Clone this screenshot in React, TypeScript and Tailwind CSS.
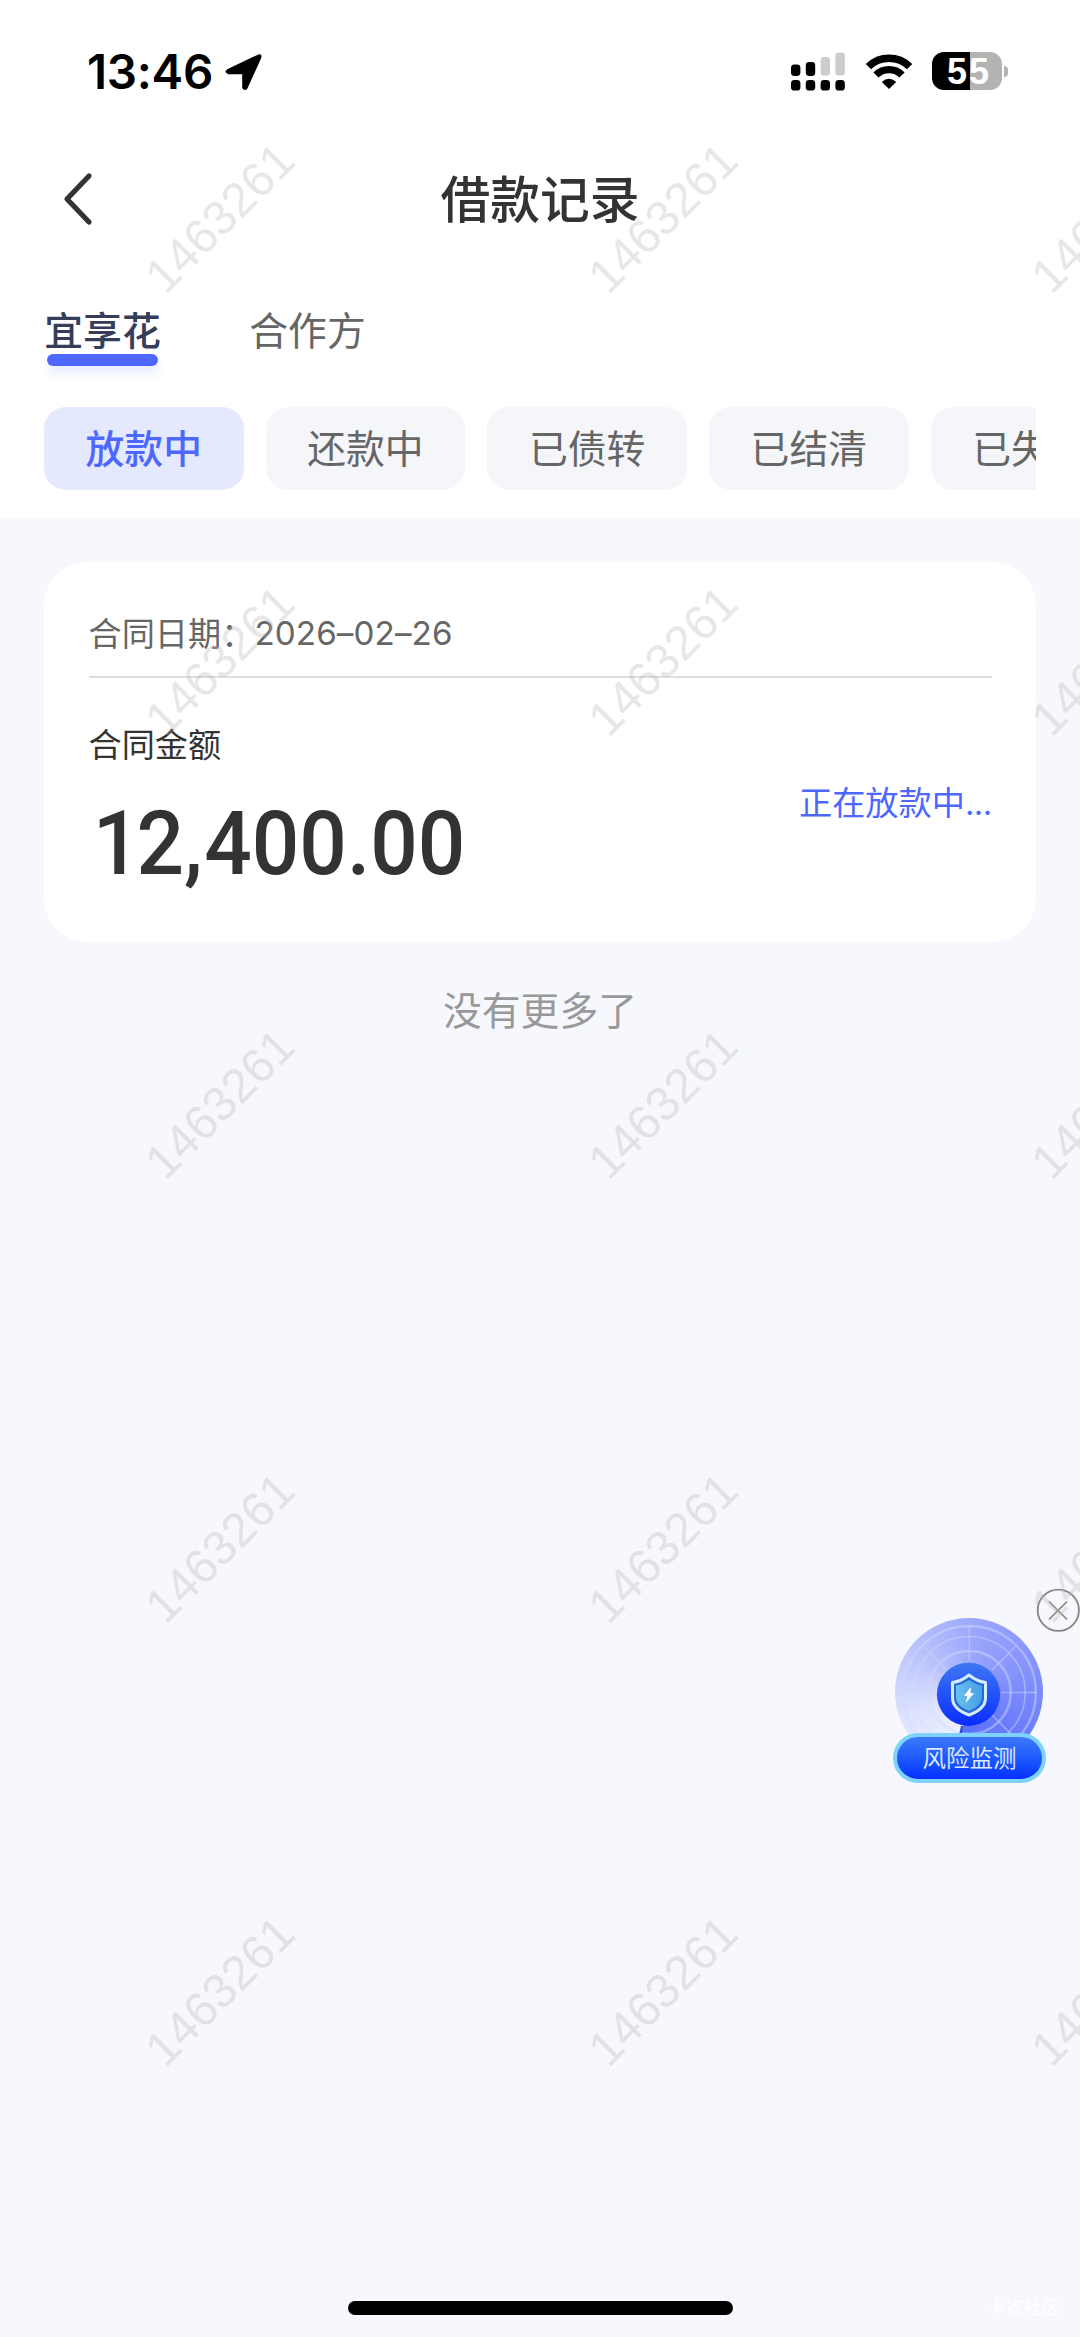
import React from 'react';

const filters = ['放款中', '还款中', '已债转', '已结清', '已失效'];
const rows = [0, 1, 2, 3, 4];
const cols = [0, 1, 2];

function StatusBar() {
  return (
    <div className="flex h-[144px] items-start pt-[50px] pl-[87px] pr-[72px] text-black">
      <span className="mt-[-1px] w-[138px] text-[47.500px] leading-[46px] font-semibold tracking-[-0.3px] whitespace-nowrap">13:46</span>
      <svg className="mt-[3px]" width="38" height="38" viewBox="0 0 38 38">
        <path d="M2.200 16.200 31.800 2.200 Q38 -0.500 36 5.600 L22.400 35.400 Q19.800 39 17.200 35 V21.200 H3.400 Q-1.800 19.600 2.200 16.200Z" fill="#000" />
      </svg>
      <div className="flex-1" />
      <svg className="mt-[2px]" width="54" height="39" viewBox="0 0 54 39">
        <rect x="0" y="12.400" width="9.400" height="11.600" rx="3.400" />
        <rect x="14.800" y="10" width="9.400" height="14" rx="3.400" />
        <rect x="29.600" y="5" width="9.400" height="18.600" rx="3.400" fill="#ccc" />
        <rect x="44.400" y="0.400" width="9.400" height="23.200" rx="3.400" fill="#ccc" />
        <rect x="0" y="28" width="9.400" height="10.600" rx="3.400" />
        <rect x="14.800" y="28" width="9.400" height="10.600" rx="3.400" />
        <rect x="29.600" y="28" width="9.400" height="10.600" rx="3.400" />
        <rect x="44.400" y="28" width="9.400" height="10.600" rx="3.400" />
      </svg>
      <svg className="mt-[4px] ml-[20px]" width="48" height="36" viewBox="0 0 48 36">
        <path d="M3.400 12.600 A29.500 29.500 0 0 1 44.600 12.600" fill="none" stroke="#000" strokeWidth="7.600" />
        <path d="M11 21 A18.400 18.400 0 0 1 37 21" fill="none" stroke="#000" strokeWidth="7.400" />
        <path d="M24 35 L16.800 28 Q24 21.600 31.200 28Z" />
      </svg>
      <div className="mt-[2px] ml-[19px] flex items-center gap-[2px]">
        <div className="flex h-[38px] w-[70px] items-center justify-center rounded-[12px] bg-[linear-gradient(90deg,#000_0_38px,#b3b3b3_38px)] pt-[1px] text-[36px] leading-[38px] font-bold font-['Liberation_Sans'] tracking-[2px] text-white">
          <span className="-mr-[4px]">55</span>
        </div>
        <div className="h-[11px] w-[4px] rounded-r-full bg-[#b3b3b3]" />
      </div>
    </div>
  );
}

function Watermarks() {
  return (
    <div className="pointer-events-none absolute inset-0 overflow-hidden">
      {rows.map((r) =>
        cols.map((c) => (
          <span
            key={`${r}-${c}`}
            className="absolute flex h-[60px] w-[240px] -translate-x-1/2 -translate-y-1/2 -rotate-45 items-center justify-center text-[48px] font-['Liberation_Sans'] text-[#b4b4b4]/32"
            style={{ left: 219.5 + c * 443.2, top: 218 + r * 443.2 }}
          >
            1463261
          </span>
        )),
      )}
    </div>
  );
}

function RiskWidget() {
  return (
    <div className="absolute top-[1588px] right-0 h-[200px] w-[190px]">
      <div className="absolute top-[30px] left-[5px] h-[148px] w-[148px] rounded-full bg-[conic-gradient(from_190deg,#f0f3ff,#dde2fe_60deg,#b9c2fc_120deg,#98a5fb_180deg,#8492fb_240deg,#6a7cfb_300deg,#5a70fb)] [clip-path:inset(0_0_30px_0)]" />
      <svg className="absolute top-0 left-0" width="190" height="200" viewBox="0 0 190 200">
        <defs>
          <linearGradient id="core" x1="0" y1="0" x2="0" y2="1">
            <stop offset="0" stopColor="#3d78f2" />
            <stop offset="1" stopColor="#0a2cff" />
          </linearGradient>
          <linearGradient id="shield" x1="0" y1="0" x2="1" y2="0">
            <stop offset="0" stopColor="#6cc0f0" />
            <stop offset="1" stopColor="#449fe4" />
          </linearGradient>
          <clipPath id="cut"><rect x="0" y="0" width="190" height="148" /></clipPath>
        </defs>
        <g clipPath="url(#cut)">
          <g fill="none" stroke="#d3dbff" strokeOpacity="0.45">
            <circle cx="79.300" cy="104.500" r="66.500" strokeWidth="2.400" />
            <circle cx="79.300" cy="104.500" r="56" strokeWidth="1.600" />
            <circle cx="79.300" cy="104.500" r="41.500" strokeWidth="2.600" />
            <path d="M79.300 38V72M111 104.500H146M57 82 34 59M102 82l23-23M102 127l24 24" strokeWidth="1.500" />
          </g>
          <circle cx="78.500" cy="106.300" r="31.600" fill="url(#core)" />
          <path d="M71 138h2l-1 9h-3z" fill="#2d4bd0" />
        </g>
        <path d="M79 87 Q87 93.500 95.500 94.500 V110 Q95.500 121 79 127 Q62.500 121 62.500 110 V94.500 Q71 93.500 79 87Z" fill="#2469d8" stroke="#d3ecff" strokeWidth="3" strokeLinejoin="round" />
        <path d="M79 92 Q85.500 96.500 92 97.500 V109 Q92 118 79 123 Q66 118 66 109 V97.500 Q72.500 96.500 79 92Z" fill="url(#shield)" />
        <path d="M80.500 100 74.500 107.500H78L76 114 83.500 105.500H80Z" fill="#fff" stroke="#fff" strokeWidth="0.800" />
        <circle cx="168.300" cy="22.300" r="20.600" fill="none" stroke="#858585" strokeWidth="1.800" />
        <path d="M159 13.500l18 18M177 13.500l-18 18" stroke="#858585" strokeWidth="1.700" />
      </svg>
      <div className="absolute top-[145px] left-[3px] flex h-[50px] w-[153px] items-center justify-center rounded-full border-[4px] border-[#7fd3fb] bg-linear-to-b from-[#3d78fa] to-[#0a2cff] pt-[1px] text-[23.500px] leading-none text-[#dce6ff]">
        风险监测
      </div>
    </div>
  );
}

export default function App() {
  return (
    <div className="relative flex h-[2337px] w-[1080px] flex-col overflow-hidden bg-[#f7f8fd] font-['Inter','Noto_Sans_CJK_SC',sans-serif]">
      <header className="flex h-[518px] flex-col bg-white">
        <StatusBar />
        <div className="flex h-[110px] items-center px-[62px]">
          <svg width="32" height="54" viewBox="0 0 32 54">
            <path d="M27 4 5 27 27 50" fill="none" stroke="#333" strokeWidth="5.200" strokeLinecap="round" strokeLinejoin="round" />
          </svg>
          <h1 className="flex-1 pt-[3px] pr-[32px] text-center text-[49.800px] leading-none font-medium text-[#333]">借款记录</h1>
        </div>
        <nav className="flex gap-[88.600px] pt-[57px] pl-[44.300px] text-[38.800px] leading-[40px]">
          <div className="flex flex-col items-center font-medium text-[#363d58]">
            宜享花
            <div className="mt-[3px] h-[12px] w-[111px] rounded-full bg-[#4e68ff] shadow-[0_8px_8px_rgba(78,104,255,0.12)]" />
          </div>
          <div className="text-[#666]">合作方</div>
        </nav>
        <div className="mx-[44px] mt-[41px] flex gap-[22.200px] overflow-hidden text-[38.800px]">
          {filters.map((f, i) => (
            <div
              key={f}
              className={
                'flex h-[83px] w-[199.500px] shrink-0 items-center justify-center rounded-[22px] pt-[2px] leading-none ' +
                (i === 0 ? 'bg-[#e4e9fd] font-medium text-[#4e68ff]' : 'bg-[#f4f6fa] text-[#666]')
              }
            >
              {f}
            </div>
          ))}
        </div>
      </header>

      <main className="flex flex-col px-[44px] pt-[44px]">
        <section className="h-[380px] rounded-[44px] bg-white px-[44.500px]">
          <div className="flex h-[116px] items-end border-b-2 border-[#ddd] pb-[24px] text-[33.200px] leading-[40px] text-[#666]">
            <span className="font-['Noto_Sans_CJK_SC']">合同日期：</span>
            <span className="relative top-px tracking-[0.1px]">2026–02–26</span>
          </div>
          <div className="flex items-start justify-between">
            <div className="flex flex-col pt-[47px]">
              <span className="text-[33.200px] leading-[40px] text-[#333]">合同金额</span>
              <span className="mt-[29px] origin-left scale-x-[0.94] text-[89px] leading-[100px] font-medium font-['Roboto'] text-[#333]">
                <span className="ml-[4px] tracking-[-4px]">1</span>2<span className="tracking-[1.500px]">,</span>400.00
              </span>
            </div>
            <span className="pt-[105px] text-[33.200px] leading-[40px] text-[#4e68ff]">
              正在放款中<span className="tracking-[-0.700px]">...</span>
            </span>
          </div>
        </section>
        <p className="mt-[49px] text-center text-[38.800px] leading-[40px] text-[#999]">没有更多了</p>
      </main>

      <RiskWidget />
      <Watermarks />
      <div className="absolute top-[2301px] left-[348px] h-[14px] w-[385px] rounded-full bg-black" />
      <span className="absolute top-[2299px] left-[988px] text-[18px] leading-[18px] text-white">卡农社区</span>
    </div>
  );
}
